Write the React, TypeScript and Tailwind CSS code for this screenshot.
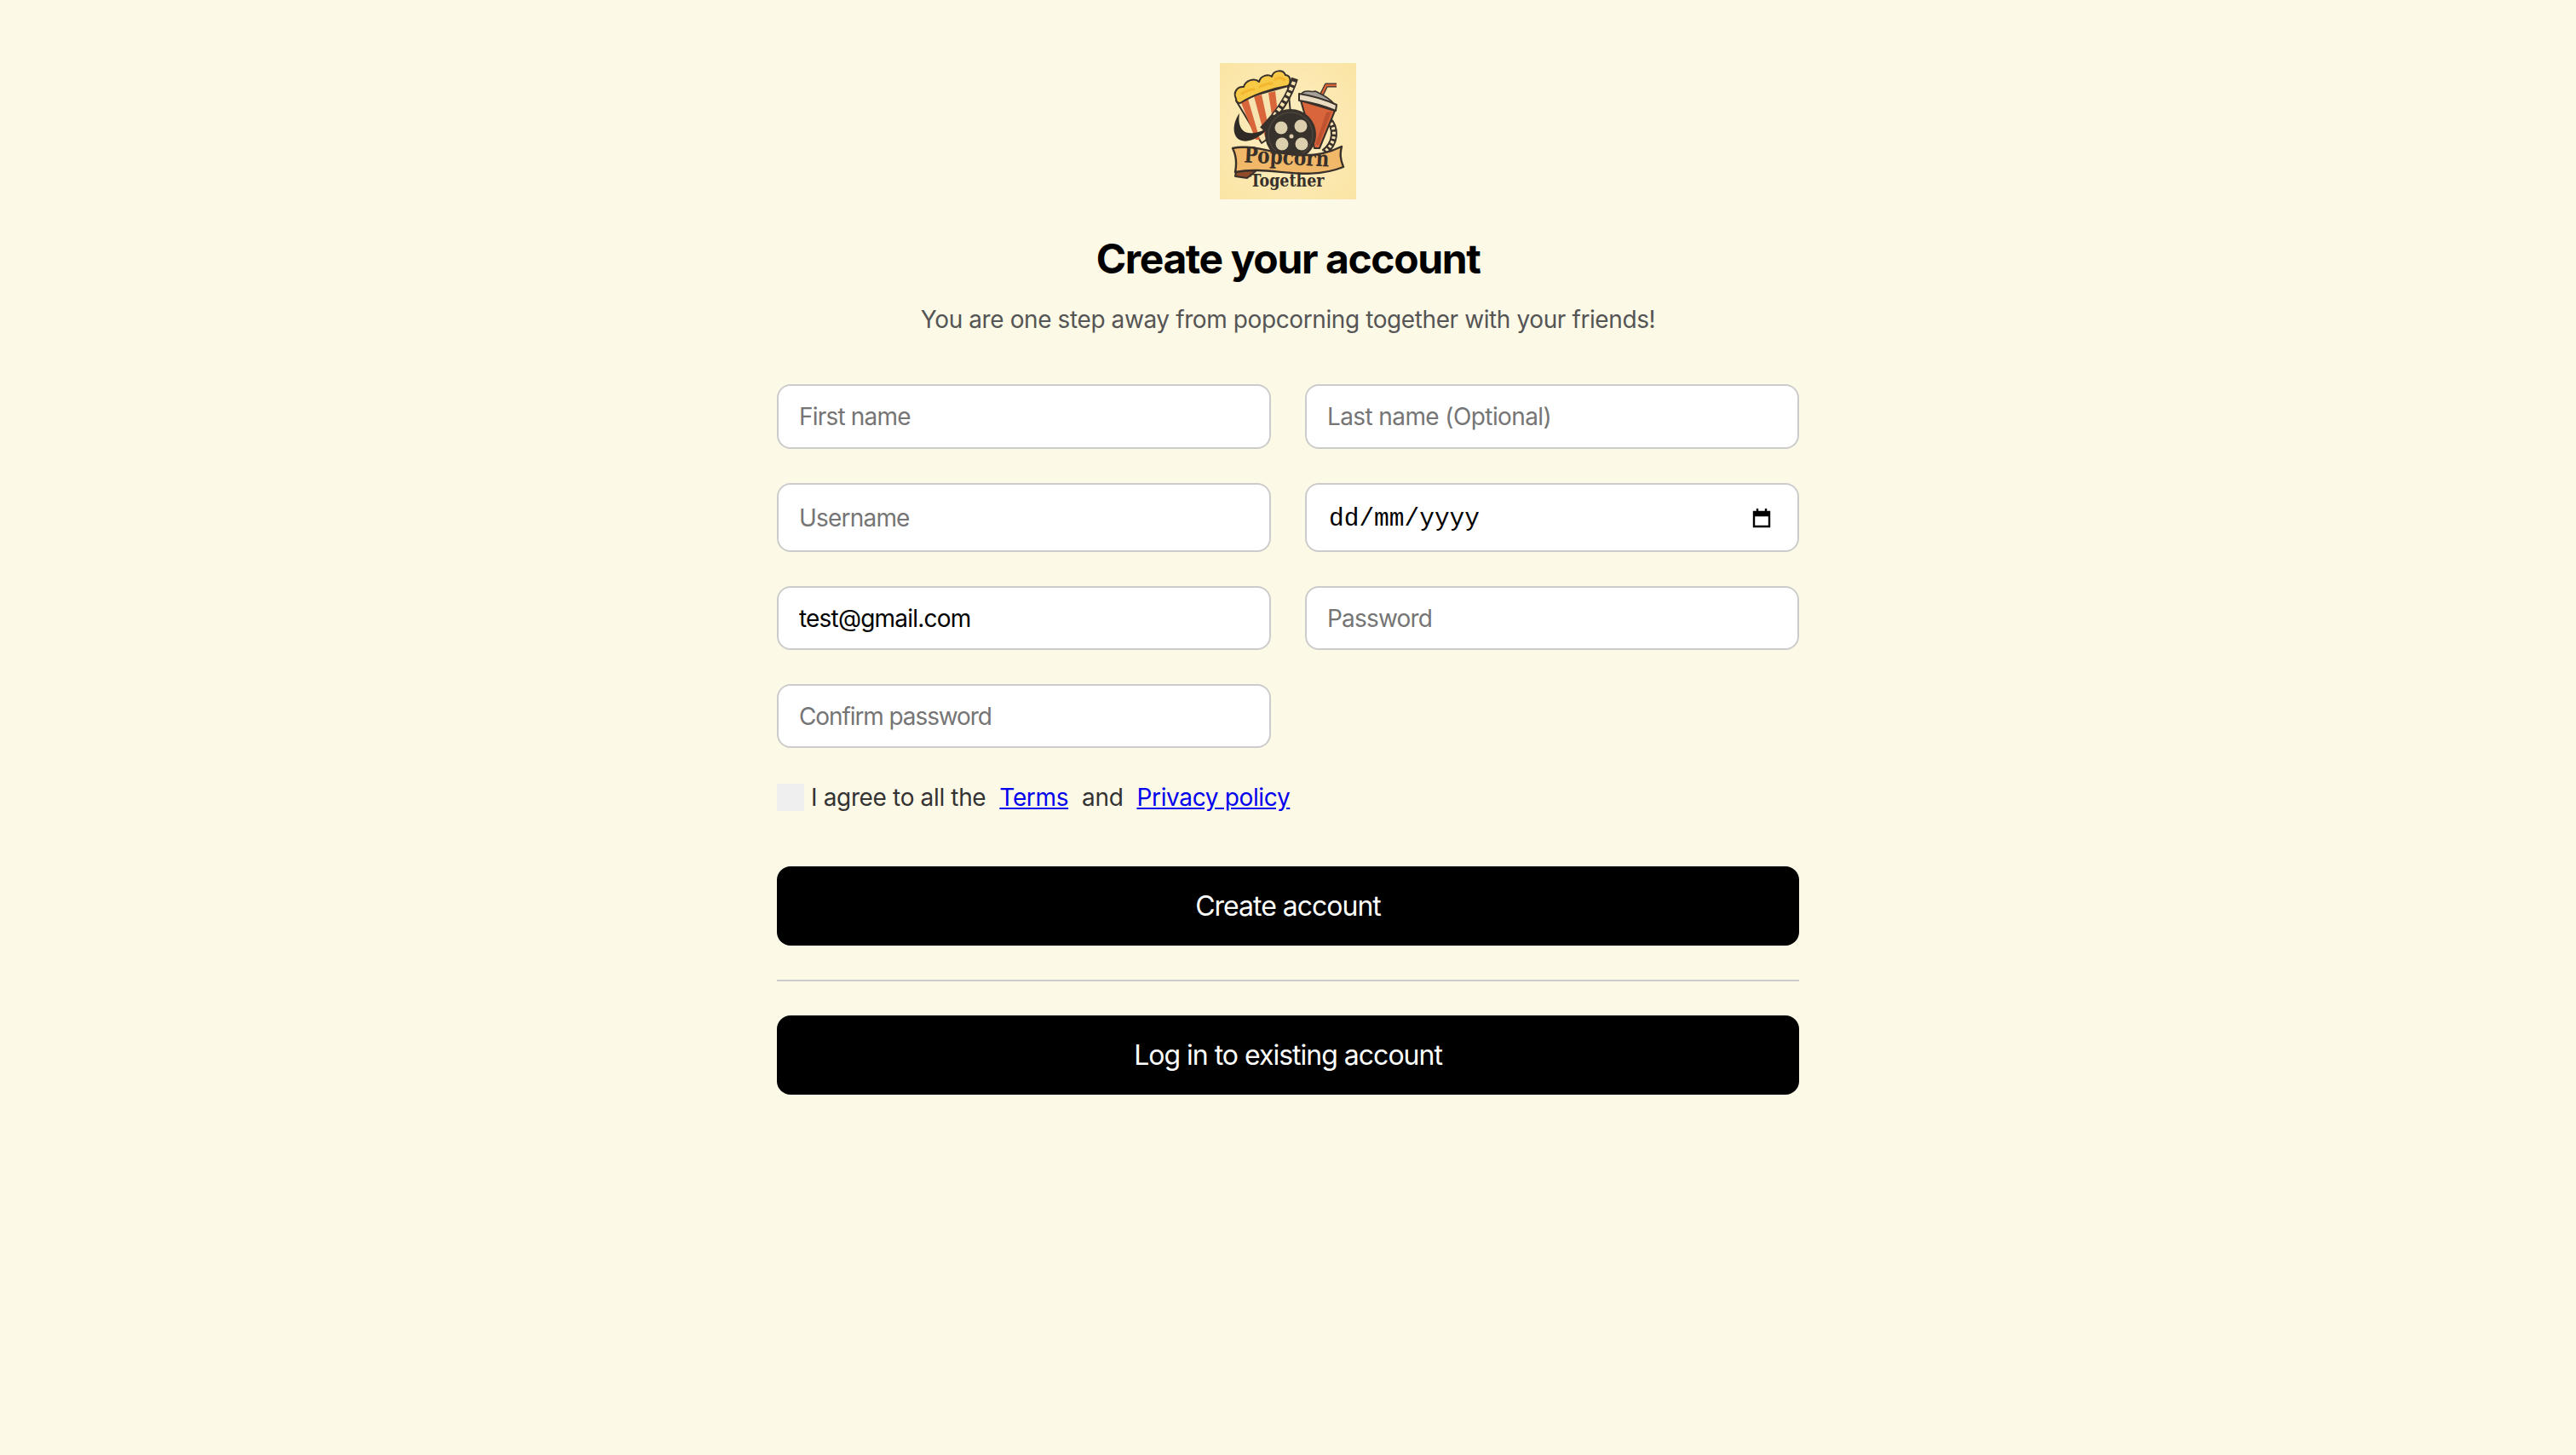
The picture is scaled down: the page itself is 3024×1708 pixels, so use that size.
const Logo = () => (
  <svg viewBox="0 0 160 160" className="w-[160px] h-[160px] shrink-0 bg-[#fbe7ab]">
    <defs>
      <radialGradient id="logoBg" cx="50%" cy="50%" r="65%">
        <stop offset="0%" stopColor="#fdefc4" />
        <stop offset="100%" stopColor="#fbe5a6" />
      </radialGradient>
    </defs>
    <rect width="160" height="160" fill="url(#logoBg)" />

    {/* popcorn box */}
    <path d="M19 44 L80 27 L84 70 L49 94 Z" fill="#f7e3b0" stroke="#38302a" strokeWidth="2" strokeLinejoin="round" />
    <path d="M24 44 L33 42 L47 90 L42 90 Z" fill="#d9653a" />
    <path d="M40 39 L49 37 L59 83 L53 87 Z" fill="#d9653a" />
    <path d="M57 35 L65 33 L70 76 L64 80 Z" fill="#d9653a" />
    <path d="M19 42 C15 34 21 27 28 28 C30 20 41 17 46 22 C48 14 57 13 61 16 C63 8 74 7 77 14 C85 15 83 26 79 27 C60 30 38 38 24 47 C21 47 19 45 19 42 Z" fill="#f8c945" stroke="#38302a" strokeWidth="2" strokeLinejoin="round" />
    <path d="M26 36 C30 33 36 31 40 31 M47 28 C52 25 57 24 61 24 M65 19 C69 17 73 17 76 20" fill="none" stroke="#f4b62e" strokeWidth="3" strokeLinecap="round" />

    {/* swoosh, end of the film strip */}
    <path d="M23 59 C15 70 14 85 23 90 C33 95 46 88 58 76 C46 82 33 85 27 79 C22 74 22 66 23 59 Z" fill="#2f2a25" />

    {/* right hand film loop */}
    <path d="M127 66 C137 76 137 94 122 105" fill="none" stroke="#38302a" strokeWidth="8" />
    <path d="M127 66 C137 76 137 94 122 105" fill="none" stroke="#f7e3b0" strokeWidth="4" strokeDasharray="3 2.5" />

    {/* drink */}
    <path d="M118 40 L125 26 L137 26" fill="none" stroke="#38302a" strokeWidth="5" strokeLinejoin="round" />
    <path d="M118 40 L125 26 L137 26" fill="none" stroke="#d9653a" strokeWidth="2.6" strokeLinejoin="round" />
    <path d="M96 36 C100 30 108 35 112 33 C118 36 128 40 134 48 L94 40 Z" fill="#a5a198" stroke="#38302a" strokeWidth="1.5" />
    <path d="M95 44 L135 56 L117 100 L111 100 Z" fill="#d9653a" stroke="#38302a" strokeWidth="2" strokeLinejoin="round" />
    <path d="M125 58 L131 57 L116 96 L112 96 Z" fill="#bf5230" />
    <path d="M93 36 C106 38 124 43 137 49 L136 56 C122 50 106 46 93 44 Z" fill="#e9dcc0" stroke="#38302a" strokeWidth="2" strokeLinejoin="round" />

    {/* film strip */}
    <path d="M88 18 C82 38 70 58 50 78" fill="none" stroke="#38302a" strokeWidth="8" />
    <path d="M87 22 C81 38 72 52 62 64" fill="none" stroke="#f7e3b0" strokeWidth="4.5" strokeDasharray="4 3" />

    {/* reel */}
    <circle cx="83" cy="84" r="30" fill="#38322c" />
    <circle cx="83" cy="84" r="26" fill="none" stroke="#4c443c" strokeWidth="1.5" />
    <circle cx="72" cy="76" r="7.5" fill="#dccfae" />
    <circle cx="95" cy="74" r="7.5" fill="#dccfae" />
    <circle cx="73" cy="95" r="7.5" fill="#dccfae" />
    <circle cx="96" cy="95" r="7.5" fill="#dccfae" />
    <circle cx="84" cy="86" r="2.5" fill="#dccfae" />

    {/* ribbon */}
    <path d="M20 122 L18 133 L32 135 L42 127 Z" fill="#8f4a2a" stroke="#38302a" strokeWidth="2" strokeLinejoin="round" />
    <path d="M15 100 C50 92 90 124 143 98 C141 106 141 112 145 122 C100 140 60 120 18 128 C20 118 19 108 15 100 Z" fill="#f0b868" stroke="#38302a" strokeWidth="2.4" strokeLinejoin="round" />
    <text x="78" y="119" textAnchor="middle" textLength="100" lengthAdjust="spacingAndGlyphs" fontFamily="'DejaVu Serif', serif" fontWeight="700" fontSize="26" fill="#38302a" transform="rotate(3 78 119)">Popcorn</text>
    <text x="79" y="145" textAnchor="middle" textLength="87" lengthAdjust="spacingAndGlyphs" fontFamily="'DejaVu Serif', serif" fontWeight="700" fontSize="20" fill="#38302a">Together</text>
  </svg>
);

const inputClass =
  "w-full bg-white border-2 border-[#cccccc] rounded-[16px] px-[24px] text-[28px] text-black outline-none placeholder:text-[#757575]";

const App = () => {
  return (
    <div className="min-h-[1708px] bg-[#fdf9e7] flex flex-col items-center pt-[74px] font-['Inter',sans-serif]">
      <Logo />
      <h1 className="mt-[38px] text-[48px] leading-[64px] font-bold tracking-[-1.4px] text-black">Create your account</h1>
      <p className="mt-[19px] text-[28px] leading-[40px] tracking-[-0.4px] text-[#555555]">
        You are one step away from popcorning together with your friends!
      </p>

      <div className="mt-[56px] w-[1200px] flex flex-col">
        <div className="grid grid-cols-2 gap-x-[40px] gap-y-[40px]">
          <input className={`${inputClass} h-[76px] tracking-[-0.8px]`} placeholder="First name" />
          <input className={`${inputClass} h-[76px] tracking-[-0.6px]`} placeholder="Last name (Optional)" />
          <input className={`${inputClass} h-[81px] tracking-[-0.8px]`} placeholder="Username" />
          <div className={`${inputClass} h-[81px] flex items-center justify-between pr-[30px]`}>
            <span className="pl-[2px] pt-[3px] font-['Liberation_Mono',monospace] text-[29.5px] text-black">dd/mm/yyyy</span>
            <svg viewBox="0 0 24 24" className="w-[24px] h-[26px]" fill="none">
              <path d="M3 5h18v17H3z M3 9h18" stroke="#000" strokeWidth="2.4" />
              <path d="M3 4h18v5H3z" fill="#000" />
              <path d="M7 1v4M17 1v4" stroke="#000" strokeWidth="2.4" />
            </svg>
          </div>
          <input className={`${inputClass} h-[75px] tracking-[-0.8px]`} defaultValue="test@gmail.com" />
          <input className={`${inputClass} h-[75px] tracking-[-0.8px]`} placeholder="Password" type="password" />
          <input className={`${inputClass} h-[75px] tracking-[-1.1px]`} placeholder="Confirm password" type="password" />
        </div>

        <div className="mt-[42px] flex items-center h-[32px] text-[28px] tracking-[-0.35px] text-[#333333]">
          <span className="w-[32px] h-[32px] bg-[#efefef] shrink-0" />
          <span className="ml-[8px]">I agree to all the</span>
          <a href="#" className="ml-[16px] text-[#0000ee] underline">Terms</a>
          <span className="ml-[16px]">and</span>
          <a href="#" className="ml-[16px] text-[#0000ee] underline">Privacy policy</a>
        </div>

        <button className="mt-[65px] h-[93px] rounded-[16px] bg-black text-white text-[32px] tracking-[-1px]">Create account</button>
        <div className="mt-[40px] h-[2px] bg-[#cccccc]" />
        <button className="mt-[40px] h-[93px] rounded-[16px] bg-black text-white text-[32px] tracking-[-1px]">Log in to existing account</button>
      </div>
    </div>
  );
};

export default App;
